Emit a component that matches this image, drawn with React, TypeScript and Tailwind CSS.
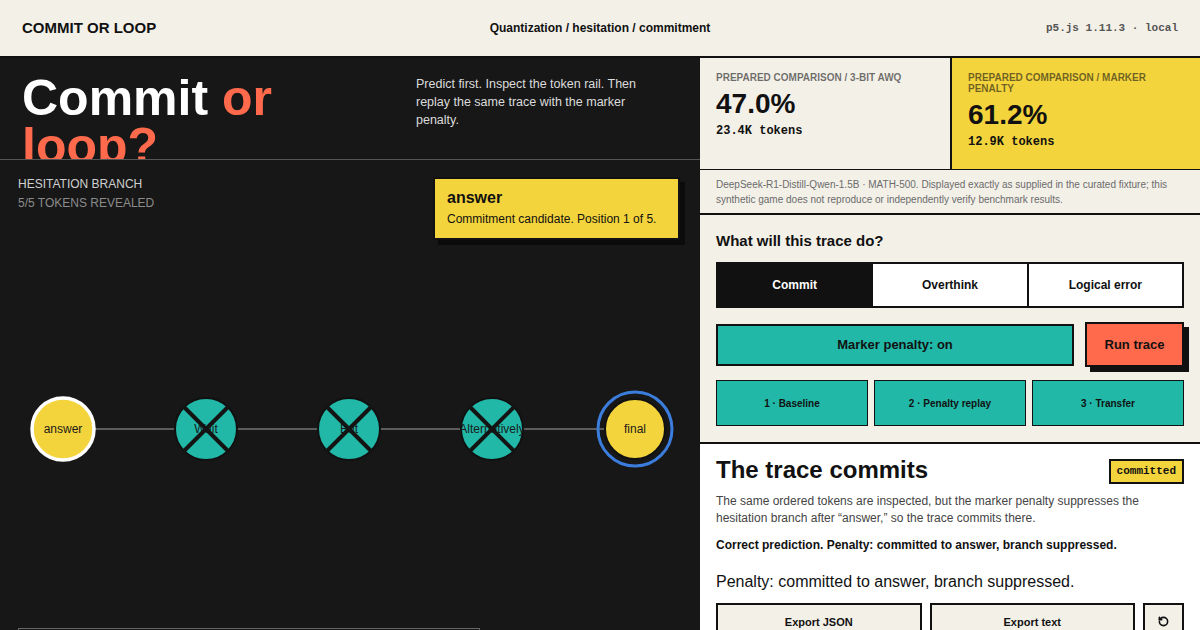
import React from 'react';
import { RotateCcw } from 'lucide-react';

const nodes = [
  { x: 63, label: 'answer', kind: 'commit' },
  { x: 206, label: 'Wait', kind: 'cut' },
  { x: 349, label: 'But', kind: 'cut' },
  { x: 492, label: 'Alternatively', kind: 'cut' },
  { x: 635, label: 'final', kind: 'final' },
];

const CY = 269;

const TokenRail: React.FC = () => (
  <svg className="absolute inset-0" width={700} height={468} viewBox="0 0 700 468">
    <line x1={63} y1={CY} x2={635} y2={CY} stroke="#5c5c5c" strokeWidth={2} />
    {nodes.map((n) => (
      <g key={n.label}>
        {n.kind === 'final' && (
          <circle cx={n.x} cy={CY} r={37} fill="none" stroke="#3b7ddd" strokeWidth={3} />
        )}
        <circle
          cx={n.x}
          cy={CY}
          r={n.kind === 'final' ? 30 : 31}
          fill={n.kind === 'cut' ? '#21b8a8' : '#f4d43c'}
          stroke={n.kind === 'commit' ? '#ffffff' : '#111111'}
          strokeWidth={n.kind === 'commit' ? 3.5 : 2}
        />
        <text
          x={n.x}
          y={CY}
          textAnchor="middle"
          dominantBaseline="central"
          fontSize={12}
          fill="#1a1a1a"
          fontFamily="'Liberation Sans', Arial, sans-serif"
        >
          {n.label}
        </text>
        {n.kind === 'cut' && (
          <g stroke="#141414" strokeWidth={4}>
            <line x1={n.x - 23} y1={CY - 23} x2={n.x + 23} y2={CY + 23} />
            <line x1={n.x + 23} y1={CY - 23} x2={n.x - 23} y2={CY + 23} />
          </g>
        )}
      </g>
    ))}
  </svg>
);

export default function App() {
  return (
    <div className="h-screen w-[1200px] overflow-hidden bg-[#f3f0e8] font-['Liberation_Sans',Arial,sans-serif] text-[#111]">
      {/* top bar */}
      <header className="grid h-[58px] grid-cols-3 items-center border-b-2 border-[#111] px-[22px]">
        <span className="text-[15px] font-bold">COMMIT OR LOOP</span>
        <span className="text-center text-[12px] font-bold">Quantization / hesitation / commitment</span>
        <span className="text-right font-['Liberation_Mono',monospace] text-[11px] font-bold text-[#555]">
          p5.js 1.11.3 · local
        </span>
      </header>

      <div className="grid grid-cols-[700px_500px]">
        {/* left: stage */}
        <section className="flex flex-col bg-[#171717]">
          <div className="flex h-[102px] overflow-hidden border-b border-[#555] px-[22px] pt-[16px]">
            <h1 className="w-[372px] shrink-0 text-[50px] font-bold leading-[48px] text-white">
              Commit <span className="text-[#ff6a4c]">or loop?</span>
            </h1>
            <p className="ml-[22px] mt-[1px] w-[240px] text-[12.5px] leading-[18px] text-[#dcdcdc]">
              Predict first. Inspect the token rail. Then replay the same trace with the marker penalty.
            </p>
          </div>

          <div className="relative h-[468px]">
            <TokenRail />
            <div className="relative px-[18px] pt-[15px] text-[12px] leading-[19px]">
              <div className="text-[#cfcfcf]">HESITATION BRANCH</div>
              <div className="text-[#8b8b8b]">5/5 TOKENS REVEALED</div>
            </div>
            <div className="absolute left-[433px] top-[17px] w-[247px] border-2 border-[#111] bg-[#f4d43c] px-[12px] pb-[11px] pt-[9px] shadow-[5px_5px_0_#0b0b0b]">
              <div className="text-[16px] font-bold leading-[20px]">answer</div>
              <div className="mt-[3px] text-[12px] leading-[16px]">Commitment candidate. Position 1 of 5.</div>
            </div>
          </div>

          <div className="mx-[18px] h-[40px] w-[462px] border border-[#666]" />
        </section>

        {/* right: controls */}
        <section className="flex flex-col">
          <div className="grid grid-cols-2 border-b border-[#111]">
            <div className="px-4 pb-[19px] pt-[14px]">
              <div className="text-[10px] font-bold leading-[11px] text-[#111111]/60">PREPARED COMPARISON / 3-BIT AWQ</div>
              <div className="mt-[7px] text-[28px] font-bold leading-none">47.0%</div>
              <div className="mt-[5px] font-['Liberation_Mono',monospace] text-[12px] font-bold leading-[16px]">23.4K tokens</div>
            </div>
            <div className="border-l-2 border-[#111] bg-[#f4d43c] px-4 pb-[19px] pt-[14px]">
              <div className="text-[10px] font-bold leading-[11px] text-[#111111]/60">PREPARED COMPARISON / MARKER PENALTY</div>
              <div className="mt-[7px] text-[28px] font-bold leading-none">61.2%</div>
              <div className="mt-[5px] font-['Liberation_Mono',monospace] text-[12px] font-bold leading-[16px]">12.9K tokens</div>
            </div>
          </div>

          <p className="border-b-2 border-[#111] px-4 pb-[6px] pt-[7px] text-[10px] leading-[15px] text-[#6b6b6b]">
            DeepSeek-R1-Distill-Qwen-1.5B · MATH-500. Displayed exactly as supplied in the curated fixture; this synthetic game does not reproduce or independently verify benchmark results.
          </p>

          <div className="border-b-2 border-[#111] px-4 pb-[16px] pt-[17px]">
            <h2 className="text-[15px] font-bold leading-[18px]">What will this trace do?</h2>
            <div className="mt-[12px] flex h-[46px] border-2 border-[#111] text-[12px] font-bold">
              <button className="flex-1 bg-[#111] text-white">Commit</button>
              <button className="flex-1 border-l-2 border-[#111] bg-white">Overthink</button>
              <button className="flex-1 border-l-2 border-[#111] bg-white">Logical error</button>
            </div>
            <div className="mt-[14px] flex items-center gap-[11px] text-[13px] font-bold">
              <button className="h-[42px] flex-1 border-2 border-[#111] bg-[#21b8a8]">Marker penalty: on</button>
              <button className="h-[45px] w-[99px] border-2 border-[#111] bg-[#ff6a4c] shadow-[5px_5px_0_#111]">Run trace</button>
            </div>
            <div className="mt-[13px] grid grid-cols-3 gap-[6px] text-[10px] font-bold">
              <button className="h-[46px] border border-[#111] bg-[#21b8a8]">1 · Baseline</button>
              <button className="h-[46px] border border-[#111] bg-[#21b8a8]">2 · Penalty replay</button>
              <button className="h-[46px] border border-[#111] bg-[#21b8a8]">3 · Transfer</button>
            </div>
          </div>

          <div className="bg-white px-4 pb-6 pt-[12px]">
            <div className="flex items-center justify-between">
              <h2 className="text-[24px] font-bold leading-[28px]">The trace commits</h2>
              <span className="mt-[3px] border-2 border-[#111] bg-[#f4d43c] px-[6px] py-[4px] font-['Liberation_Mono',monospace] text-[11px] font-bold leading-[13px]">
                committed
              </span>
            </div>
            <p className="mt-[9px] text-[12px] leading-[17.3px] text-[#444]">
              The same ordered tokens are inspected, but the marker penalty suppresses the hesitation branch after “answer,” so the trace commits there.
            </p>
            <p className="mt-[9px] text-[12px] font-bold leading-[17px]">
              Correct prediction. Penalty: committed to answer, branch suppressed.
            </p>
            <p className="mt-[17px] text-[16px] leading-[22px]">Penalty: committed to answer, branch suppressed.</p>
            <div className="mt-[10px] flex gap-[8px] text-[11px] font-bold">
              <button className="flex-1 border-2 border-[#111] bg-[#f3f0e8] py-[9px] leading-[16px]">Export JSON</button>
              <button className="flex-1 border-2 border-[#111] bg-[#f3f0e8] py-[9px] leading-[16px]">Export text</button>
              <button className="flex w-[41px] items-center justify-center border-2 border-[#111] bg-[#f3f0e8]">
                <RotateCcw size={11} strokeWidth={3.5} />
              </button>
            </div>
          </div>
        </section>
      </div>
    </div>
  );
}
